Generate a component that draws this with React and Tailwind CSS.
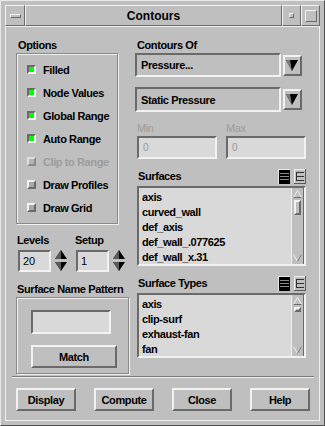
import React from "react";

const RAISED = "border-t-[#f2f2f2] border-l-[#f2f2f2] border-b-[#6a6a6a] border-r-[#6a6a6a]";
const SUNKEN = "border-t-[#6a6a6a] border-l-[#6a6a6a] border-b-[#f2f2f2] border-r-[#f2f2f2]";
const ETCHED = "border border-[#8a8a8a] shadow-[inset_1px_1px_0_#f0f0f0,1px_1px_0_#f0f0f0]";

const OPTIONS = [
  { label: "Filled", on: true },
  { label: "Node Values", on: true },
  { label: "Global Range", on: true },
  { label: "Auto Range", on: true },
  { label: "Clip to Range", on: false, disabled: true },
  { label: "Draw Profiles", on: false },
  { label: "Draw Grid", on: false },
];

const SURFACES = ["axis", "curved_wall", "def_axis", "def_wall_.077625", "def_wall_x.31"];
const SURFACE_TYPES = ["axis", "clip-surf", "exhaust-fan", "fan"];

function Check({ on, disabled }) {
  if (on) {
    return <span className={`w-[9px] h-[9px] border-2 bg-[#00ff00] ${SUNKEN}`} />;
  }
  return (
    <span
      className={`w-[9px] h-[9px] border-2 ${disabled ? "bg-[#b4b4b4] border-t-[#e0e0e0] border-l-[#e0e0e0] border-b-[#8a8a8a] border-r-[#8a8a8a]" : `bg-[#a8a8a8] ${RAISED}`}`}
    />
  );
}

function Spinner() {
  return (
    <svg width="14" height="23" viewBox="0 0 14 23">
      <polygon points="7,1 13,10 1,10" fill="#000" />
      <polygon points="7,1 7,10 1,10" fill="#5a5a5a" />
      <polygon points="1,13 13,13 7,22" fill="#000" />
      <polygon points="1,13 7,13 7,22" fill="#5a5a5a" />
    </svg>
  );
}

function DropArrow() {
  return (
    <div className={`w-[19px] h-[21px] border-2 flex items-center justify-center ${RAISED}`}>
      <svg width="13" height="13" viewBox="0 0 13 13">
        <polygon points="0,1 12,1 6,12" fill="#000" />
        <polygon points="0,1 4,1 6,12" fill="#7a7a7a" />
      </svg>
    </div>
  );
}

function ListIcons() {
  return (
    <div className="flex gap-[4px]">
      <svg width="12" height="15" viewBox="0 0 12 15">
        <rect x="0" y="0" width="12" height="15" fill="#000" />
        <line x1="0" y1="0.5" x2="12" y2="0.5" stroke="#e8e8e8" />
        <line x1="0.5" y1="0" x2="0.5" y2="15" stroke="#e8e8e8" />
        <line x1="2" y1="4.5" x2="11" y2="4.5" stroke="#8a8a8a" />
        <line x1="2" y1="7.5" x2="11" y2="7.5" stroke="#8a8a8a" />
        <line x1="2" y1="10.5" x2="11" y2="10.5" stroke="#8a8a8a" />
      </svg>
      <svg width="12" height="15" viewBox="0 0 12 15">
        <rect x="0" y="0" width="12" height="15" fill="#bfbfbf" />
        <line x1="0" y1="0.5" x2="12" y2="0.5" stroke="#f0f0f0" />
        <line x1="0.5" y1="0" x2="0.5" y2="15" stroke="#f0f0f0" />
        <line x1="11.5" y1="0" x2="11.5" y2="15" stroke="#5a5a5a" />
        <line x1="0" y1="14.5" x2="12" y2="14.5" stroke="#5a5a5a" />
        <line x1="3" y1="3.5" x2="10" y2="3.5" stroke="#303030" />
        <line x1="3" y1="7.5" x2="10" y2="7.5" stroke="#303030" />
        <line x1="3" y1="11.5" x2="10" y2="11.5" stroke="#303030" />
        <line x1="2.5" y1="3" x2="2.5" y2="12" stroke="#303030" />
      </svg>
    </div>
  );
}

function ScrollBar({ thumbH }) {
  return (
    <div className="w-[13px] border-l border-l-[#f0f0f0] border-r border-r-[#6a6a6a] flex flex-col items-center pt-[2px] pb-[2px]">
      <svg width="9" height="8" viewBox="0 0 9 8">
        <polygon points="4.5,0.5 8.5,7.5 0.5,7.5" fill="none" stroke="#f2f2f2" />
        <line x1="0.5" y1="7.5" x2="8.5" y2="7.5" stroke="#6a6a6a" />
      </svg>
      <div className={`w-[7px] mt-[2px] border-2 ${RAISED}`} style={{ height: thumbH }} />
      <div className="flex-1" />
      <svg width="9" height="8" viewBox="0 0 9 8">
        <polyline points="0.5,0.5 4.5,7.5 8.5,0.5" fill="none" stroke="#f2f2f2" />
        <line x1="4.5" y1="7.5" x2="8.5" y2="0.5" stroke="#6a6a6a" />
      </svg>
    </div>
  );
}

function ListBox({ items, h, thumbH }) {
  return (
    <div className={`flex border-2 ${SUNKEN}`} style={{ height: h }}>
      <div className="flex-1 bg-[#d9d9d9] pl-[3px] pt-[2px] overflow-hidden">
        {items.map((s) => (
          <div key={s} className="h-[15px] leading-[15px]">{s}</div>
        ))}
      </div>
      <ScrollBar thumbH={thumbH} />
    </div>
  );
}

function Button({ children, w }) {
  return (
    <div className={`${w} h-[23px] border-2 ${RAISED} flex items-center justify-center text-[11px] font-bold`}>
      {children}
    </div>
  );
}

export default function App() {
  return (
    <div className="w-[325px] h-[426px] bg-[#bfbfbf] text-black font-['Liberation_Sans',Arial,sans-serif] border border-t-[#e8e8e8] border-l-[#e8e8e8] border-b-[#505050] border-r-[#505050] p-[4px] flex flex-col">
      {/* Title bar */}
      <div className="h-[21px] flex">
        <div className={`w-[20px] border ${RAISED} flex items-center justify-center`}>
          <div className="w-[11px] h-[4px] border border-t-[#f2f2f2] border-l-[#f2f2f2] border-b-[#6a6a6a] border-r-[#6a6a6a]" />
        </div>
        <div className={`flex-1 border ${RAISED} flex items-center justify-center text-[12px] font-bold`}>
          Contours
        </div>
        <div className={`w-[19px] border ${RAISED} flex items-center justify-center`}>
          <div className="w-[5px] h-[5px] border border-t-[#f2f2f2] border-l-[#f2f2f2] border-b-[#6a6a6a] border-r-[#6a6a6a]" />
        </div>
        <div className={`w-[19px] border ${RAISED} flex items-center justify-center`}>
          <div className="w-[12px] h-[12px] border border-t-[#f2f2f2] border-l-[#f2f2f2] border-b-[#6a6a6a] border-r-[#6a6a6a]" />
        </div>
      </div>

      {/* Content */}
      <div className="flex-1 border border-t-[#f0f0f0] border-l-[#f0f0f0] border-b-[#f0f0f0] border-r-[#f0f0f0] flex flex-col text-[11px] font-bold tracking-[-0.4px] leading-[14px]">
        <div className="flex pt-[11px] pl-[10px]">
          {/* Left column */}
          <div className="w-[113px] flex flex-col">
            <div className="h-[14px] pl-[2px] mb-[1px]">Options</div>
            <div className={`w-[102px] ${ETCHED} pt-[4px] pb-[4px]`}>
              {OPTIONS.map((o) => (
                <div key={o.label} className="h-[23px] flex items-center pl-[10px] gap-[7px]">
                  <Check on={o.on} disabled={o.disabled} />
                  <span className={o.disabled ? "text-[#9c9c9c]" : ""}>{o.label}</span>
                </div>
              ))}
            </div>

            <div className="flex mt-[9px] pl-[1px] gap-[7px]">
              <div className="flex flex-col">
                <div className="h-[14px] mb-[2px]">Levels</div>
                <div className="flex items-center gap-[3px] pl-[1px]">
                  <div className={`w-[33px] h-[22px] border-2 ${SUNKEN} bg-[#d9d9d9] flex items-center pl-[3px] font-normal tracking-normal`}>20</div>
                  <Spinner />
                </div>
              </div>
              <div className="flex flex-col">
                <div className="h-[14px] mb-[2px]">Setup</div>
                <div className="flex items-center gap-[3px] pl-[1px]">
                  <div className={`w-[33px] h-[22px] border-2 ${SUNKEN} bg-[#d9d9d9] flex items-center pl-[3px] font-normal tracking-normal`}>1</div>
                  <Spinner />
                </div>
              </div>
            </div>

            <div className="h-[14px] mt-[10px] mb-[1px] pl-[1px]">Surface Name Pattern</div>
            <div className={`w-[113px] ${ETCHED} pt-[12px] pb-[5px] pl-[14px] flex flex-col gap-[11px]`}>
              <div className={`w-[80px] h-[24px] border-2 ${SUNKEN} bg-[#d9d9d9]`} />
              <Button w="w-[86px]">Match</Button>
            </div>
          </div>

          {/* Right column */}
          <div className="w-[171px] ml-[6px] flex flex-col">
            <div className="h-[14px] pl-[2px] mb-[1px]">Contours Of</div>
            <div className="flex items-center gap-[2px]">
              <div className={`w-[146px] h-[24px] border-2 ${SUNKEN} flex items-center pl-[4px]`}>Pressure...</div>
              <DropArrow />
            </div>
            <div className="flex items-center gap-[2px] mt-[10px]">
              <div className={`w-[146px] h-[25px] border-2 ${SUNKEN} flex items-center pl-[4px]`}>Static Pressure</div>
              <DropArrow />
            </div>

            <div className="flex mt-[9px] pl-[2px] gap-[9px]">
              <div className="flex flex-col">
                <div className="h-[14px] mb-[1px] text-[#9c9c9c] font-normal">Min</div>
                <div className={`w-[80px] h-[23px] border-2 ${SUNKEN} bg-[#d9d9d9] flex items-center pl-[4px] text-[10px] font-normal text-[#9a9a9a]`}>0</div>
              </div>
              <div className="flex flex-col">
                <div className="h-[14px] mb-[1px] text-[#9c9c9c] font-normal">Max</div>
                <div className={`w-[80px] h-[23px] border-2 ${SUNKEN} bg-[#d9d9d9] flex items-center pl-[4px] text-[10px] font-normal text-[#9a9a9a]`}>0</div>
              </div>
            </div>

            <div className="flex items-center justify-between h-[16px] mt-[9px] mb-[2px] pl-[3px]">
              <span>Surfaces</span>
              <ListIcons />
            </div>
            <div className="pl-[2px]">
              <ListBox items={SURFACES} h={80} thumbH={15} />
            </div>

            <div className="flex items-center justify-between h-[16px] mt-[9px] mb-[2px] pl-[3px]">
              <span>Surface Types</span>
              <ListIcons />
            </div>
            <div className="pl-[2px]">
              <ListBox items={SURFACE_TYPES} h={65} thumbH={5} />
            </div>
          </div>
        </div>

        {/* Separator */}
        <div className="mt-auto mx-[6px] mr-[5px] border-t border-t-[#7a7a7a] border-b border-b-[#f0f0f0]" />

        {/* Bottom buttons */}
        <div className="flex gap-[18px] pl-[10px] mt-[10px] mb-[9px]">
          <Button w="w-[60px]">Display</Button>
          <Button w="w-[60px]">Compute</Button>
          <Button w="w-[60px]">Close</Button>
          <Button w="w-[60px]">Help</Button>
        </div>
      </div>
    </div>
  );
}
